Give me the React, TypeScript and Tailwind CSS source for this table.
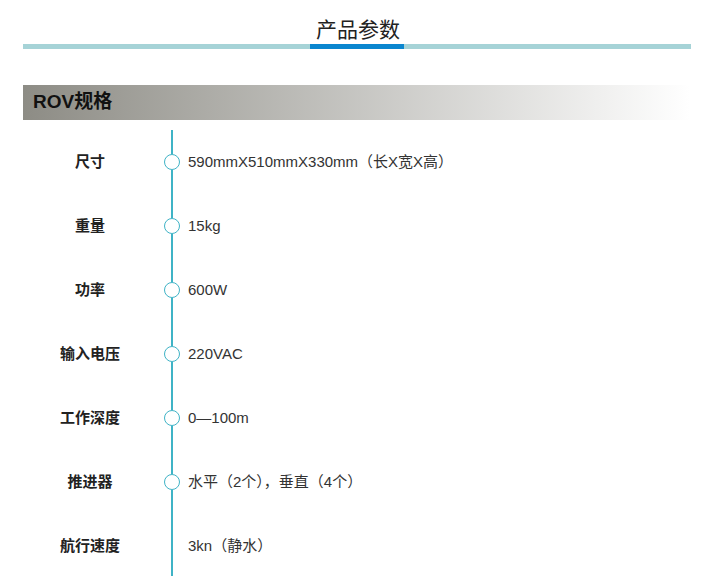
const specs = [
  { label: '尺寸', value: '590mmX510mmX330mm（长X宽X高）' },
  { label: '重量', value: '15kg' },
  { label: '功率', value: '600W' },
  { label: '输入电压', value: '220VAC' },
  { label: '工作深度', value: '0—100m' },
  { label: '推进器', value: '水平（2个），垂直（4个）' },
  { label: '航行速度', value: '3kn（静水）', last: true },
]

function SpecRow({ label, value, last }: { label: string; value: string; last?: boolean }) {
  return (
    <div className="flex h-16 items-stretch">
      <div className="flex w-[134px] items-center justify-center text-[15px] font-bold text-[#222]">
        {label}
      </div>
      {/* timeline column */}
      <div className="ml-[7px] flex w-4 flex-col items-center">
        <div className="w-[2px] flex-1 bg-[#3fb3c6]" />
        {!last && <div className="h-4 w-4 rounded-full border-[1.5px] border-[#3fb3c6] bg-white" />}
        <div className="w-[2px] flex-1 bg-[#3fb3c6]" />
      </div>
      <div className="ml-2 flex items-center text-[15px] text-[#333]">{value}</div>
    </div>
  )
}

export default function App() {
  return (
    <div
      className="h-[576px] w-[716px] overflow-hidden bg-white px-[23px]"
      style={{ fontFamily: '"Liberation Sans", "Noto Sans CJK SC", sans-serif' }}
    >
      <div className="flex h-[44px] items-end justify-center pb-[4px]">
        <h2 className="text-[21px] leading-none text-[#222]">产品参数</h2>
      </div>
      <div className="flex h-[5px] w-[668px] justify-center bg-[#a6d3d7]">
        <div className="h-full w-[94px] bg-[#0a86cf]" />
      </div>

      <div className="mt-[36px] flex h-[35px] w-[667px] items-center bg-[linear-gradient(to_right,#8d8c85,#ffffff)] pl-[10px]">
        <span className="text-[19px] font-bold text-[#111]">ROV规格</span>
      </div>

      <div className="mt-[10px] flex flex-col">
        {specs.map((s) => (
          <SpecRow key={s.label} label={s.label} value={s.value} last={s.last} />
        ))}
      </div>
    </div>
  )
}
